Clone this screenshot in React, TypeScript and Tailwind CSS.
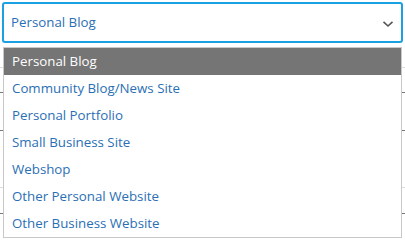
import React from "react";

const options = [
  "Personal Blog",
  "Community Blog/News Site",
  "Personal Portfolio",
  "Small Business Site",
  "Webshop",
  "Other Personal Website",
  "Other Business Website",
];

export default function App() {
  return (
    <div className="relative w-[405px] h-[240px] overflow-hidden bg-white font-['Open_Sans',sans-serif]">
      {/* page underneath */}
      <div className="flex flex-col pt-[2px]">
        <div className="mx-[2px] h-[41px] rounded-[3px] border-2 border-[#1ba1e2] flex items-center justify-between pl-[7px] pr-[7px]">
          <span className="text-[13.3px] text-[#2a6fb5] leading-none">Personal Blog</span>
          <svg width="12" height="8" viewBox="0 0 12 8" className="mt-[2px]">
            <path d="M1.5 1.8 L6 6 L10.5 1.8" fill="none" stroke="#555" strokeWidth="1.6" />
          </svg>
        </div>
        <div className="h-[25px] border-b border-[#dddddd]" />
        <div className="h-[25px] border-b border-[#777]" />
        <div className="h-[38px] border-b border-[#777]" />
        <div className="h-[57px] border-b border-[#dddddd]" />
        <div className="h-[26px] border-b border-[#777]" />
      </div>

      {/* open dropdown list */}
      <ul className="absolute left-[3px] top-[47px] w-[399px] border border-[#c8c8c8] bg-white">
        {options.map((o, i) => (
          <li
            key={o}
            className={
              i === 0
                ? "h-[27px] pl-[8px] flex items-center text-[13.3px] bg-[#757575] text-white"
                : "h-[27px] pl-[8px] flex items-center text-[13.3px] text-[#2a6fb5]"
            }
          >
            {o}
          </li>
        ))}
      </ul>
    </div>
  );
}
